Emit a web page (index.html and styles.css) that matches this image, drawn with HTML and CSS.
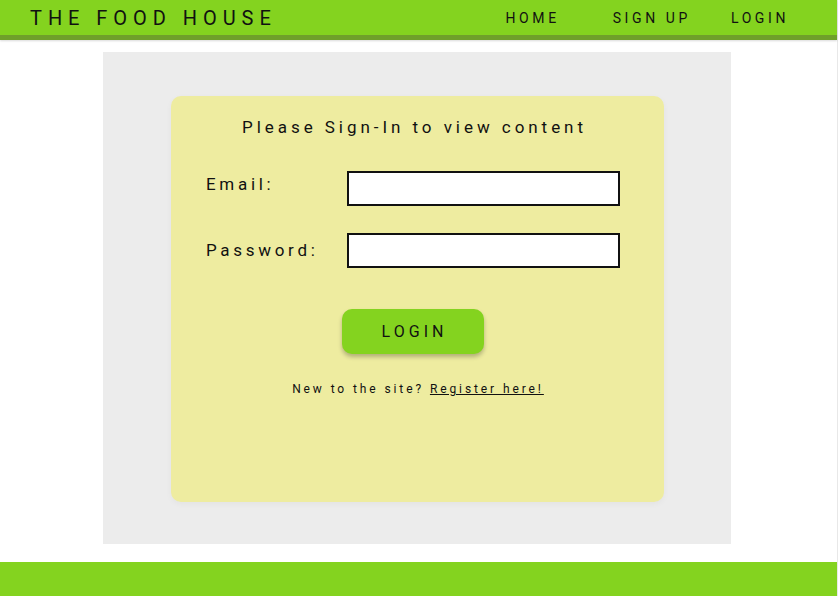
FILE: index.html
```html
<!DOCTYPE html>
<html>
<head>
<meta charset="utf-8">
<link rel="stylesheet" href="styles.css">
</head>
<body>
<div class="page">
  <header class="topbar">
    <div class="brand">THE FOOD HOUSE</div>
    <nav class="nav">
      <a class="nav-link home">HOME</a>
      <a class="nav-link signup">SIGN UP</a>
      <a class="nav-link login">LOGIN</a>
    </nav>
  </header>
  <main class="main">
    <section class="panel">
      <div class="card">
        <h1 class="card-title">Please Sign-In to view content</h1>
        <div class="field">
          <label class="label">Email:</label>
          <input class="input" type="text">
        </div>
        <div class="field">
          <label class="label">Password:</label>
          <input class="input" type="password">
        </div>
        <div class="actions">
          <button class="btn">LOGIN</button>
        </div>
        <p class="register">New to the site? <a class="register-link">Register here!</a></p>
      </div>
    </section>
  </main>
  <footer class="footer"></footer>
</div>
</body>
</html>
```
FILE: styles.css
```css
* { box-sizing: border-box; }
html, body { margin: 0; padding: 0; background: #fff; }
body { font-family: Roboto, "Liberation Sans", sans-serif; color: #111; }
.page {
  width: 838px;
  height: 596px;
  display: flex;
  flex-direction: column;
  border-right: 1px solid #e8e8e8;
}
.topbar {
  height: 40px;
  background: #84d31f;
  border-bottom: 5px solid #6fa02a;
  box-shadow: 0 1px 2px rgba(0,0,0,0.15);
  display: flex;
  align-items: center;
  padding: 0 0 0 30px;
}
.brand {
  font-size: 20px;
  letter-spacing: 5.95px;
  font-weight: 400;
}
.nav { margin-left: auto; display: flex; margin-right: 48px; }
.nav-link {
  font-size: 14px;
  letter-spacing: 3.6px;
  color: #111;
}
.home { margin-right: 53px; }
.signup { margin-right: 40px; }
.main {
  flex: 1;
  padding: 12px 0 0 103px;
}
.panel {
  width: 628px;
  height: 492px;
  background: #ececec;
  padding: 44px 0 0 68px;
}
.card {
  width: 493px;
  height: 406px;
  background: #eeeca0;
  border-radius: 10px;
  box-shadow: 0 2px 6px rgba(0,0,0,0.04);
  padding: 20px 0 0 35px;
}
.card-title {
  margin: 0 0 33px 0;
  padding-right: 41px;
  text-align: center;
  font-size: 17px;
  font-weight: 400;
  letter-spacing: 3.95px;
  line-height: 22px;
}
.field {
  display: flex;
  align-items: center;
  height: 35px;
  margin-bottom: 27px;
}
.label {
  width: 141px;
  font-size: 17px;
  letter-spacing: 3.7px;
  margin-top: -9px;
}
.field + .field .label { margin-top: -1px; }
.input {
  width: 273px;
  height: 35px;
  border: 2px solid #111;
  background: #fff;
  margin: 0;
}
.actions {
  display: flex;
  justify-content: center;
  padding-right: 45px;
  margin-top: 41px;
}
.btn {
  width: 142px;
  height: 45px;
  background: #84d31f;
  border: none;
  border-radius: 10px;
  box-shadow: 0 3px 4px rgba(0,0,0,0.25);
  font-family: Roboto, "Liberation Sans", sans-serif;
  font-size: 16px;
  letter-spacing: 4px;
  color: #111;
  padding: 0 0 0 4px;
}
.register {
  margin: 28px 0 0 0;
  padding-right: 34px;
  text-align: center;
  font-size: 12px;
  letter-spacing: 2.9px;
}
.register-link { text-decoration: underline; color: #111; }
.footer {
  height: 34px;
  background: #84d31f;
}
```
